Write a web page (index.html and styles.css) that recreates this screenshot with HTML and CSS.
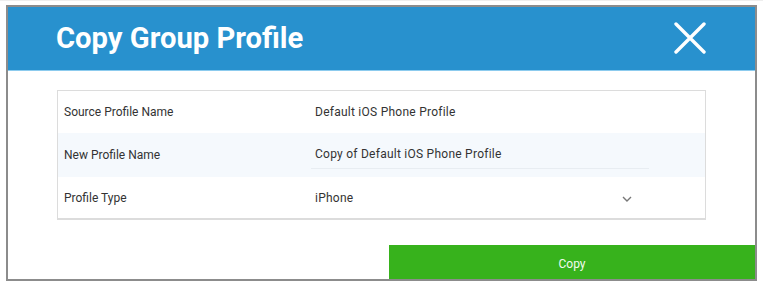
FILE: index.html
```html
<!DOCTYPE html>
<html lang="en">
<head>
    <meta charset="UTF-8">
    <title>Copy Group Profile</title>
    <link rel="stylesheet" href="styles.css">
</head>
<body>
    <div class="dialog">
        <div class="dialog-header">
            <h1>Copy Group Profile</h1>
            <button class="close-btn" aria-label="Close">
                <svg width="32" height="32" viewBox="0 0 32 32">
                    <path d="M2 2 L30 30 M30 2 L2 30" stroke="#fff" stroke-width="3.4" stroke-linecap="round" fill="none"/>
                </svg>
            </button>
        </div>

        <div class="dialog-body">
            <div class="form-table">
                <div class="form-row">
                    <div class="form-label">Source Profile Name</div>
                    <div class="form-value">Default iOS Phone Profile</div>
                </div>
                <div class="form-row alt">
                    <div class="form-label">New Profile Name</div>
                    <div class="form-value">
                        <div class="text-input">Copy of Default iOS Phone Profile</div>
                    </div>
                </div>
                <div class="form-row last">
                    <div class="form-label">Profile Type</div>
                    <div class="form-value select">
                        <span>iPhone</span>
                        <svg class="chevron" width="10" height="6" viewBox="0 0 10 6">
                            <path d="M1 1 L5 5 L9 1" stroke="#777" stroke-width="1.4" fill="none"/>
                        </svg>
                    </div>
                </div>
            </div>
        </div>

        <div class="dialog-footer">
            <button class="copy-btn">Copy</button>
        </div>
    </div>
</body>
</html>
```

FILE: styles.css
```css
* {
    margin: 0;
    padding: 0;
    box-sizing: border-box;
    font-family: Roboto, 'Liberation Sans', sans-serif;
}

body {
    background: #fff;
    border-top: 1px solid #eee;
    padding: 4px 0 0 6px;
}

.dialog {
    width: 751px;
    border: 2px solid #8c8c8c;
    background: #fff;
}

.dialog-header {
    height: 64px;
    background: #2891ce;
    border-bottom: 1px solid #8ccbee;
    display: flex;
    align-items: center;
    justify-content: space-between;
    padding: 0 49px 1px 48px;
}

.dialog-header h1 {
    color: #fff;
    font-size: 29.2px;
    font-weight: bold;
}

.close-btn {
    background: none;
    border: none;
    width: 32px;
    height: 32px;
    display: flex;
}

.dialog-body {
    padding: 19px 0 0 49px;
}

.form-table {
    width: 649px;
    border: 1px solid #dcdcdc;
    border-width: 1px 1px 2px 1px;
}

.form-row {
    height: 42px;
    display: flex;
    align-items: center;
    font-size: 12px;
    color: #333;
}

.form-row.alt {
    height: 44px;
    background: #f5f9fd;
}

.form-row.last {
    height: 41px;
}

.form-label {
    flex: 0 0 257px;
    padding-left: 6px;
}

.form-value {
    flex: 1;
    padding-right: 50px;
    letter-spacing: 0.25px;
}

.text-input {
    width: 338px;
    margin-left: -4px;
    padding: 6px 4px 7px;
    border-bottom: 1px solid #e8edf2;
}

.form-value.select {
    display: flex;
    align-items: center;
    justify-content: space-between;
    padding-right: 73px;
}

.chevron {
    margin-top: 2px;
}

.dialog-footer {
    display: flex;
    justify-content: flex-end;
    padding-top: 25px;
}

.copy-btn {
    width: 366px;
    height: 34px;
    padding-top: 3px;
    background: #37b21c;
    border: none;
    color: #f2fbef;
    font-size: 12px;
    font-family: Roboto, 'Liberation Sans', sans-serif;
}
```
